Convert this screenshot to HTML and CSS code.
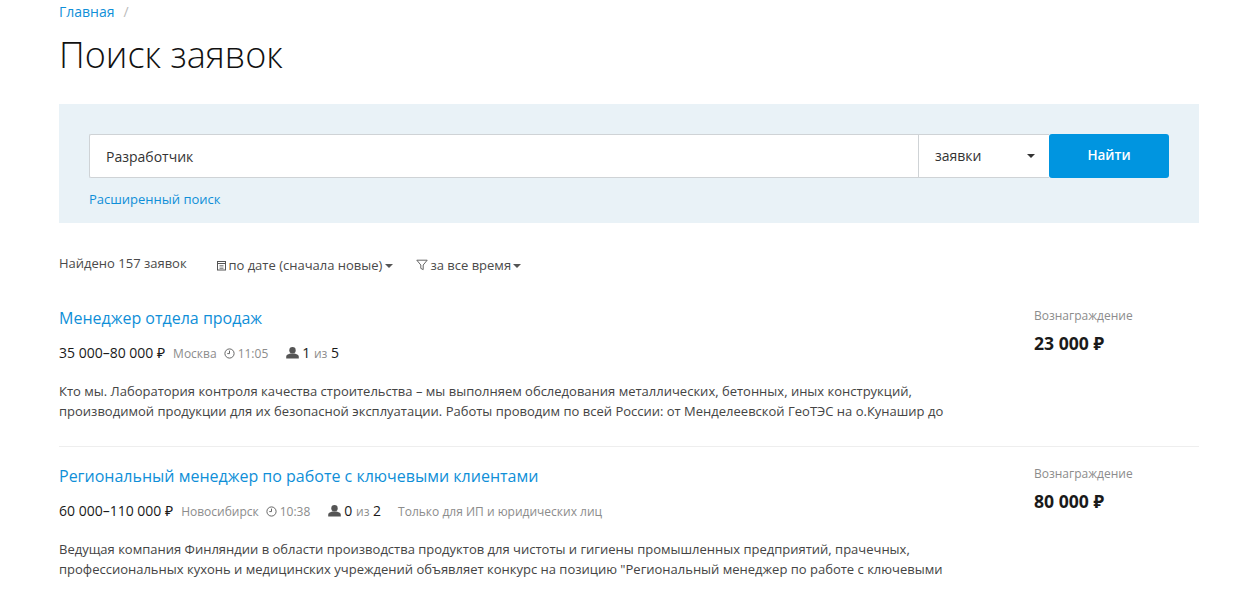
FILE: index.html
```html
<!DOCTYPE html>
<html lang="ru">
<head>
<meta charset="utf-8">
<title>Поиск заявок</title>
<link rel="stylesheet" href="styles.css">
</head>
<body>
<div class="page">
  <nav class="crumbs"><a href="#">Главная</a><span class="crumb-sep">/</span></nav>
  <h1>Поиск заявок</h1>
  <section class="search">
    <div class="search-row">
      <div class="search-input">Разработчик</div>
      <div class="search-select"><span>заявки</span><i class="caret caret-dark"></i></div>
      <div class="search-btn">Найти</div>
    </div>
    <a class="search-adv" href="#">Расширенный поиск</a>
  </section>
  <div class="filters">
    <span class="found">Найдено 157 заявок</span>
    <span class="filter filter-date">
      <svg class="ficon" width="11" height="11" viewBox="0 0 11 11"><rect x="1.500" y="1.500" width="8" height="8.500" fill="none" stroke="#555"/><path d="M1.500 3.500h8" stroke="#555"/><path d="M3.500 5.500h4M3.500 7h4M3.500 8.500h4" stroke="#777" stroke-width=".8"/></svg>
      по дате (сначала новые)<i class="caret"></i></span>
    <span class="filter filter-time">
      <svg class="ficon" width="12" height="12" viewBox="0 0 12 12"><path d="M.8 1.200h10.400L7.200 6v4.600L4.800 9.400V6z" fill="none" stroke="#555" stroke-width=".9"/></svg>
      за все время<i class="caret"></i></span>
  </div>
  <article class="item">
    <div class="item-main">
      <a class="item-title" href="#">Менеджер отдела продаж</a>
      <div class="meta">
        <span class="salary">35 000–80 000 ₽</span>
        <span class="muted city">Москва</span>
        <span class="muted time"><svg class="clock" width="11" height="11" viewBox="0 0 11 11"><circle cx="5.500" cy="5.500" r="4.600" fill="none" stroke="#666"/><path d="M5.500 2.600v3h-2.200" fill="none" stroke="#666"/></svg>11:05</span>
        <span class="people"><svg class="person" width="13" height="12" viewBox="0 0 13 12"><circle cx="6.500" cy="3.200" r="3.200" fill="#555"/><path d="M.2 11.500V9.400c0-1.600 2.800-2.500 4-2.900h4.600c1.200.4 4 1.300 4 2.900v2.100z" fill="#555"/></svg>1 <span class="muted">из</span> 5</span>
      </div>
      <p class="desc">Кто мы. Лаборатория контроля качества строительства – мы выполняем обследования металлических, бетонных, иных конструкций, производимой продукции для их безопасной эксплуатации. Работы проводим по всей России: от Менделеевской ГеоТЭС на о.Кунашир до</p>
    </div>
    <div class="reward"><div class="reward-label">Вознаграждение</div><div class="reward-value">23 000 ₽</div></div>
  </article>
  <article class="item">
    <div class="item-main">
      <a class="item-title" href="#">Региональный менеджер по работе с ключевыми клиентами</a>
      <div class="meta">
        <span class="salary">60 000–110 000 ₽</span>
        <span class="muted city">Новосибирск</span>
        <span class="muted time"><svg class="clock" width="11" height="11" viewBox="0 0 11 11"><circle cx="5.500" cy="5.500" r="4.600" fill="none" stroke="#666"/><path d="M5.500 2.600v3h-2.200" fill="none" stroke="#666"/></svg>10:38</span>
        <span class="people"><svg class="person" width="13" height="12" viewBox="0 0 13 12"><circle cx="6.500" cy="3.200" r="3.200" fill="#555"/><path d="M.2 11.500V9.400c0-1.600 2.800-2.500 4-2.900h4.600c1.200.4 4 1.300 4 2.900v2.100z" fill="#555"/></svg>0 <span class="muted">из</span> 2</span>
        <span class="muted note">Только для ИП и юридических лиц</span>
      </div>
      <p class="desc">Ведущая компания Финляндии в области производства продуктов для чистоты и гигиены промышленных предприятий, прачечных, профессиональных кухонь и медицинских учреждений объявляет конкурс на позицию "Региональный менеджер по работе с ключевыми</p>
    </div>
    <div class="reward"><div class="reward-label">Вознаграждение</div><div class="reward-value">80 000 ₽</div></div>
  </article>
</div>
</body>
</html>
```
FILE: styles.css
```css
* { box-sizing: border-box; }
html, body { margin: 0; padding: 0; height: 601px; overflow: hidden; background: #fff; }
body { font-family: "Open Sans", "Noto Sans", sans-serif; font-size: 13px; color: #333; }
a { color: #0f8fd8; text-decoration: none; }
.page { width: 1140px; margin: 0 0 0 59px; }
.crumbs { height: 24px; padding-top: 3px; line-height: 18px; font-size: 14px; }
.crumb-sep { margin-left: 9px; color: #bbb; }
h1 { margin: 10px 0 0; font-size: 36px; line-height: 42px; font-weight: 300; color: #111; height: 70px; }
.search { background: #e9f2f7; height: 119px; padding: 30px; }
.search-row { display: flex; height: 44px; }
.search-input { flex: 1; background: #fff; border: 1px solid #cfd3d6; border-right: 0; border-radius: 2px 0 0 2px; padding: 0 16px; font-size: 14px; line-height: 43px; color: #333; }
.search-select { width: 131px; background: #fff; border: 1px solid #cfd3d6; border-right: 0; padding: 0 14px 0 16px; font-size: 14px; line-height: 42px; display: flex; justify-content: space-between; align-items: center; color: #333; }
.search-btn { width: 120px; background: #0095e0; color: #fff; border-radius: 3px; font-size: 13.5px; font-weight: 600; text-align: center; line-height: 43px; }
.search-adv { display: block; margin-top: 12px; line-height: 18px; font-size: 13px; }
.caret { display: inline-block; width: 0; height: 0; border-left: 4px solid transparent; border-right: 4px solid transparent; border-top: 4px solid #555; margin-left: 1px; vertical-align: 2px; }
.caret-dark { border-top-color: #333; }
.filters { display: flex; align-items: flex-start; height: 66px; padding-top: 31px; line-height: 18px; font-size: 13px; color: #4a4a4a; }
.found { width: 157px; }
.filter-date { width: 200px; }
.filter { margin-top: 2px; }
.ficon { vertical-align: -1px; }
.filter-date .ficon { margin-right: -2px; }
.filter-date .caret { margin-left: 3px; }
.filter-time .ficon { margin-right: -1px; }
.filter-time .caret { margin-left: 2px; }
.item { display: flex; justify-content: space-between; height: 158px; border-bottom: 1px solid #eee; padding-top: 18px; }
.item-main { width: 890px; }
.item-title { display: block; font-size: 16px; line-height: 22px; }
.meta { display: flex; align-items: baseline; margin-top: 14px; line-height: 20px; font-size: 12px; }
.salary { font-size: 14px; color: #1a1a1a; }
.muted { color: #8c8c8c; font-size: 12px; }
.city { margin-left: 8px; }
.time { margin-left: 7px; }
.clock { vertical-align: -1px; margin-right: 3px; }
.people { margin-left: 18px; font-size: 14px; color: #1a1a1a; }
.person { vertical-align: -1px; margin-right: 3px; }
.note { margin-left: 17px; }
.desc { margin: 17px 0 0; font-size: 13px; line-height: 20px; color: #444; }
.reward { width: 165px; padding-top: 1px; }
.reward-label { font-size: 12px; line-height: 16px; color: #8c8c8c; }
.reward-value { margin-top: 7px; font-size: 17.6px; line-height: 24px; font-weight: 700; color: #1a1a1a; }
```
